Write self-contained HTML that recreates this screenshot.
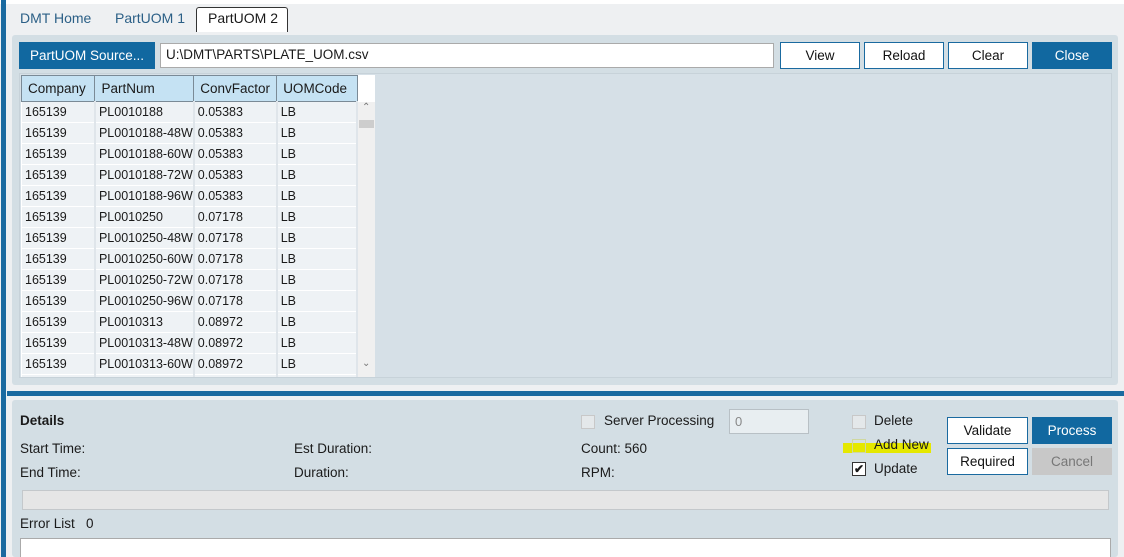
<!DOCTYPE html>
<html><head><meta charset="utf-8"><style>
*{box-sizing:border-box;margin:0;padding:0}
html,body{width:1124px;height:557px;overflow:hidden}
body{background:#eef0f2;font-family:"Segoe UI","Liberation Sans",sans-serif;font-size:13px;color:#1a1a1a;position:relative}
.a{position:absolute}
.btn{position:absolute;height:27px;display:flex;align-items:center;justify-content:center;font-size:13.5px;background:#fff;border:1px solid #1a6aa0;color:#111}
.pri{background:#1168a0;color:#fff;border-color:#1168a0}
.cb{position:absolute;width:14px;height:14px;border:1px solid #c8c8c8;background:#e4e8ea}
table{border-collapse:collapse;font-size:12.5px}
td{height:21px;background:#eef2f5;border:1px solid #fff;border-right:2px solid #dfe5ea;padding-left:3px;white-space:nowrap}
th{height:26px;background:#c5e2f3;border:1px solid #7a8a96;font-weight:normal;text-align:left;padding-left:6px;font-size:13.5px}
.t{font-size:13.5px}
</style></head><body>
<div class="a" style="left:0;top:0;width:1124px;height:4px;background:#fff"></div>
<div class="a" style="left:1px;top:0;width:5px;height:557px;background:#1a6aa0"></div>
<div class="a" style="left:20px;top:10px;font-size:14px;color:#2b5f86">DMT Home</div>
<div class="a" style="left:115px;top:10px;font-size:14px;color:#2b5f86">PartUOM 1</div>
<div class="a" style="left:196px;top:7px;width:92px;height:25px;background:#fff;border:1px solid #333;border-bottom:none;border-radius:3px 3px 0 0;font-size:14px;padding:2px 0 0 11px">PartUOM 2</div>
<div class="a" style="left:12px;top:35px;width:1106px;height:350px;background:#d3dee4;border-radius:3px"></div>
<div class="btn pri" style="left:19px;top:42px;width:136px">PartUOM Source...</div>
<div class="a" style="left:160px;top:43px;width:614px;height:25px;background:#fff;border:1px solid #aaa;font-size:13.5px;padding:3px 0 0 5px">U:\DMT\PARTS\PLATE_UOM.csv</div>
<div class="btn" style="left:780px;top:42px;width:80px">View</div>
<div class="btn" style="left:864px;top:42px;width:80px">Reload</div>
<div class="btn" style="left:948px;top:42px;width:80px">Clear</div>
<div class="btn pri" style="left:1032px;top:42px;width:80px">Close</div>
<div class="a" style="left:19px;top:73px;width:1093px;height:305px;background:#d6e0e7;border:1px solid #c7d2d9"></div>
<div class="a" style="left:21px;top:75px;width:354px;height:302px;background:#fff;overflow:hidden">
<table style="width:337px">
<tr><th style="width:75px">Company</th><th style="width:96px">PartNum</th><th style="width:84px">ConvFactor</th><th style="width:82px">UOMCode</th></tr>
<tr><td>165139</td><td>PL0010188</td><td>0.05383</td><td>LB</td></tr>
<tr><td>165139</td><td>PL0010188-48W</td><td>0.05383</td><td>LB</td></tr>
<tr><td>165139</td><td>PL0010188-60W</td><td>0.05383</td><td>LB</td></tr>
<tr><td>165139</td><td>PL0010188-72W</td><td>0.05383</td><td>LB</td></tr>
<tr><td>165139</td><td>PL0010188-96W</td><td>0.05383</td><td>LB</td></tr>
<tr><td>165139</td><td>PL0010250</td><td>0.07178</td><td>LB</td></tr>
<tr><td>165139</td><td>PL0010250-48W</td><td>0.07178</td><td>LB</td></tr>
<tr><td>165139</td><td>PL0010250-60W</td><td>0.07178</td><td>LB</td></tr>
<tr><td>165139</td><td>PL0010250-72W</td><td>0.07178</td><td>LB</td></tr>
<tr><td>165139</td><td>PL0010250-96W</td><td>0.07178</td><td>LB</td></tr>
<tr><td>165139</td><td>PL0010313</td><td>0.08972</td><td>LB</td></tr>
<tr><td>165139</td><td>PL0010313-48W</td><td>0.08972</td><td>LB</td></tr>
<tr><td>165139</td><td>PL0010313-60W</td><td>0.08972</td><td>LB</td></tr>
<tr><td>165139</td><td></td><td></td><td></td></tr>
</table>
<div class="a" style="left:337px;top:27px;width:17px;height:275px;background:#f0f0f0"></div>
<div class="a" style="left:338px;top:45px;width:15px;height:8px;background:#cdcdcd"></div>
<div class="a" style="left:341px;top:27px;font-size:10px;color:#777">&#8963;</div>
<div class="a" style="left:341px;top:283px;font-size:10px;color:#777">&#8964;</div>
</div>
<div class="a" style="left:7px;top:391px;width:1117px;height:5px;background:#1a6aa0"></div>
<div class="a" style="left:12px;top:400px;width:1106px;height:157px;background:#d3dee4;border-radius:3px"></div>
<div class="a t" style="left:20px;top:413px;font-weight:bold">Details</div>
<div class="a t" style="left:20px;top:441px">Start Time:</div>
<div class="a t" style="left:20px;top:465px">End Time:</div>
<div class="a t" style="left:294px;top:441px">Est Duration:</div>
<div class="a t" style="left:294px;top:465px">Duration:</div>
<div class="cb" style="left:581px;top:415px"></div>
<div class="a t" style="left:604px;top:413px">Server Processing</div>
<div class="a" style="left:729px;top:409px;width:80px;height:25px;background:#e8eef1;border:1px solid #b8c0c5;color:#888;padding:4px 0 0 5px">0</div>
<div class="a t" style="left:581px;top:441px">Count: 560</div>
<div class="a t" style="left:581px;top:465px">RPM:</div>
<div class="cb" style="left:852px;top:415px"></div>
<div class="a t" style="left:874px;top:413px">Delete</div>
<div class="a" style="left:843px;top:443px;width:88px;height:10px;background:#e5e800"></div>
<div class="cb" style="left:852px;top:439px;background:transparent;border-color:#cfd8a0"></div>
<div class="a t" style="left:874px;top:437px">Add New</div>
<div class="cb" style="left:852px;top:462px;background:#fff;border-color:#333;font-size:12px;line-height:12px;text-align:center;font-weight:bold">&#10004;</div>
<div class="a t" style="left:874px;top:461px">Update</div>
<div class="btn" style="left:947px;top:417px;width:81px">Validate</div>
<div class="btn pri" style="left:1032px;top:417px;width:80px">Process</div>
<div class="btn" style="left:947px;top:448px;width:81px">Required</div>
<div class="btn" style="left:1032px;top:448px;width:80px;background:#c8c8c8;border-color:#c8c8c8;color:#777">Cancel</div>
<div class="a" style="left:22px;top:490px;width:1087px;height:20px;background:#e6e6e6;border:1px solid #c4c8cb"></div>
<div class="a t" style="left:20px;top:516px">Error List &nbsp;&nbsp;0</div>
<div class="a" style="left:20px;top:538px;width:1091px;height:19px;background:#fff;border:1px solid #aaa;border-bottom:none"></div>
</body></html>
